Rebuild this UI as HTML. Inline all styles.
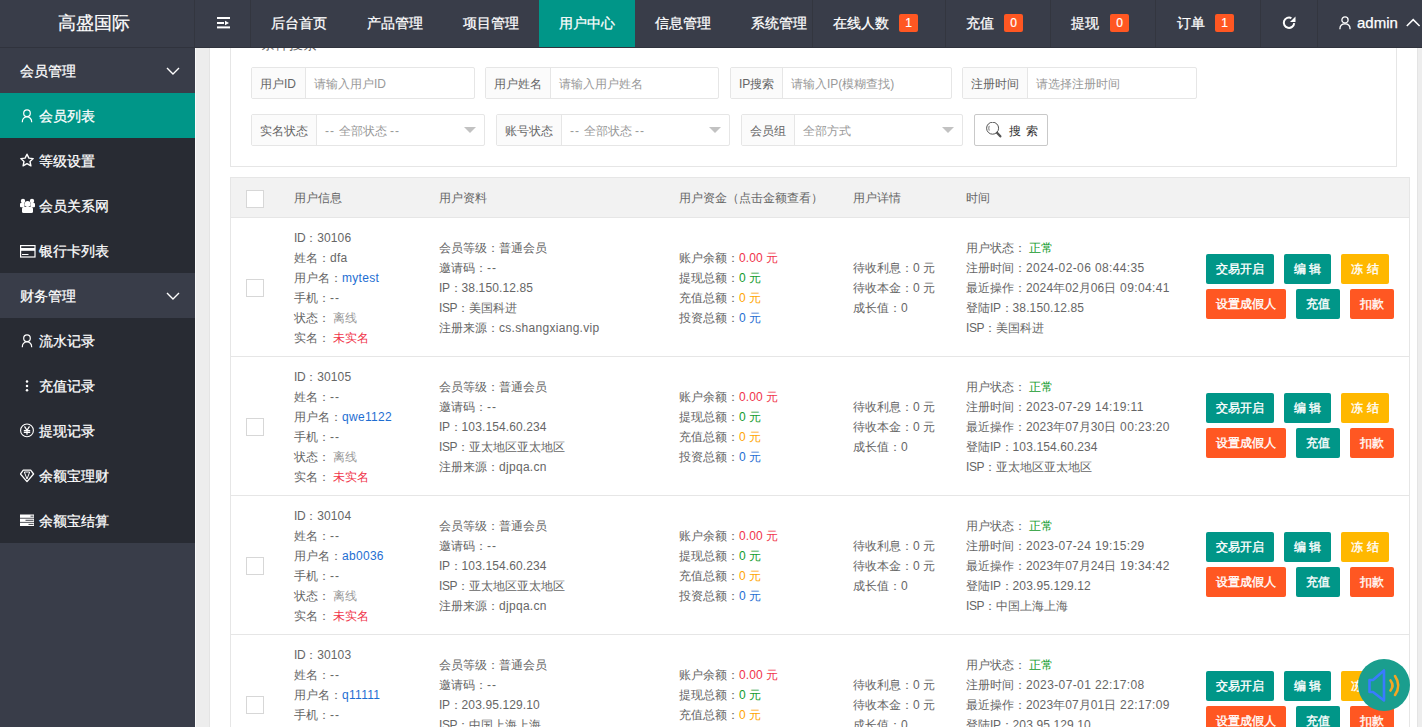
<!DOCTYPE html>
<html><head><meta charset="utf-8">
<style>
*{box-sizing:border-box;margin:0;padding:0}
html,body{width:1422px;height:727px;overflow:hidden;background:#f2f2f2;font-family:"Liberation Sans",sans-serif;}
.abs{position:absolute}
#header{position:absolute;left:0;top:0;width:1422px;height:48px;background:#393D49;border-bottom:1px solid #30333d;}
#logo{position:absolute;left:58px;top:0;height:47px;line-height:46px;color:#fff;font-size:18px;-webkit-text-stroke:0.2px #fff}
.sep{position:absolute;top:0;width:1px;height:47px;background:#33363f}
.nav{position:absolute;top:0;height:47px;line-height:46px;color:#fff;font-size:14px;-webkit-text-stroke:0.25px #fff}
.navact{background:#009688}
.badge{position:absolute;top:14px;width:19px;height:18px;line-height:19px;-webkit-text-stroke:0.2px #fff;background:#FF5722;color:#fff;border-radius:2px;font-size:12px;text-align:center}
#side{position:absolute;left:0;top:48px;width:195px;height:679px;background:#393D49}
.si{position:absolute;left:0;width:195px;height:45px;color:#fff;font-size:14px;-webkit-text-stroke:0.25px #fff}
.si .lbl{position:absolute;top:0;line-height:46px}
.si.child{background:#282B33}
.si.active{background:#009688}
.si .ic{position:absolute}
.chev{position:absolute;left:166px;top:19px}
#main{position:absolute;left:195px;top:48px;width:1227px;height:679px;background:#EDEDED;overflow:hidden;border-left:1px solid #fafafa}
#card{position:absolute;left:13px;top:-20px;width:1209px;height:800px;background:#fff;border-left:1px solid #e4e4e4;border-right:1px solid #e4e4e4}
#fs{position:absolute;left:230px;top:20px;width:1167px;height:147px;border:1px solid #e6e6e6;border-top:none}
.ig{position:absolute;height:32px;border:1px solid #e6e6e6;border-radius:2px;background:#fff;font-size:12px}
.ig .lab{position:absolute;left:0;top:0;height:30px;line-height:30px;background:#FBFBFB;border-right:1px solid #e6e6e6;color:#666;padding-left:8px;padding-top:1px}
.ig .ph{position:absolute;top:1px;line-height:30px;color:#999}
.dd{letter-spacing:1.1px}
.ig .tri{position:absolute;top:12px;width:0;height:0;border-left:6px solid transparent;border-right:6px solid transparent;border-top:6px solid #c2c2c2}
#sbtn{position:absolute;left:974px;top:114px;width:74px;height:32px;border:1px solid #C9C9C9;border-radius:2px;background:#fff;font-size:12px;color:#333}
#table{position:absolute;left:230px;top:177px;width:1180px;height:560px;border:1px solid #e6e6e6;background:#fff}
#thead{position:absolute;left:0;top:0;width:1178px;height:40px;background:#f2f2f2;border-bottom:1px solid #e6e6e6}
.th{position:absolute;top:0;line-height:40px;font-size:12px;color:#666}
.cb{position:absolute;width:18px;height:18px;border:1px solid #d7d7d7;background:#fff}
.tr{position:absolute;left:230px;width:1180px;height:139px;border-bottom:1px solid #e6e6e6}
.cell{position:absolute;font-size:12px;line-height:20px;color:#666;white-space:nowrap}
.blue{color:#1E6ED2}
.red{color:#F0344A}
.green{color:#129B2C}
.orange{color:#FFA500}
.gray{color:#999}
.cell .en{letter-spacing:0.12px}
.cell .enl{letter-spacing:0.3px}
.cell .enu{letter-spacing:-0.4px}
.cell .ent{letter-spacing:0.38px}
.btns{position:absolute;width:200px;height:65px}
.btn{position:absolute;top:0;height:30px;line-height:30px;font-size:12px;color:#fff;text-align:center;border-radius:2px;white-space:nowrap;-webkit-text-stroke:0.35px #fff}
.teal{background:#009688}
.yellow{background:#FFB800}
.orangebtn{background:#FF5722}
#audio{position:absolute;left:1358px;top:659px;width:52px;height:52px;border-radius:50%;background:#1A9E8E}
</style></head><body>
<div id="main">
  <div id="card"></div>
</div>
<div id="fs"></div>
<div class="abs" style="left:261px;top:36px;font-size:14px;color:#666;">条件搜索</div>

<div class="ig" style="left:251px;top:67px;width:224px"><span class="lab" style="width:54px">用户ID</span><span class="ph" style="left:62px">请输入用户ID</span></div>
<div class="ig" style="left:485px;top:67px;width:234px"><span class="lab" style="width:65px">用户姓名</span><span class="ph" style="left:73px">请输入用户姓名</span></div>
<div class="ig" style="left:730px;top:67px;width:222px"><span class="lab" style="width:52px">IP搜索</span><span class="ph" style="left:60px">请输入IP(模糊查找)</span></div>
<div class="ig" style="left:962px;top:67px;width:235px"><span class="lab" style="width:65px">注册时间</span><span class="ph" style="left:73px">请选择注册时间</span></div>

<div class="ig" style="left:251px;top:114px;width:234px"><span class="lab" style="width:65px">实名状态</span><span class="ph" style="left:73px"><span class="dd">--</span> 全部状态 <span class="dd">--</span></span><span class="tri" style="left:212px"></span></div>
<div class="ig" style="left:496px;top:114px;width:234px"><span class="lab" style="width:65px">账号状态</span><span class="ph" style="left:73px"><span class="dd">--</span> 全部状态 <span class="dd">--</span></span><span class="tri" style="left:212px"></span></div>
<div class="ig" style="left:741px;top:114px;width:222px"><span class="lab" style="width:53px">会员组</span><span class="ph" style="left:61px">全部方式</span><span class="tri" style="left:200px"></span></div>
<div id="sbtn"><svg style="position:absolute;left:11px;top:7px" width="17" height="17" viewBox="0 0 17 17"><circle cx="6.6" cy="6.2" r="6" fill="none" stroke="#555" stroke-width="1"/><path d="M3.2 3.8 Q2.3 6.2 3.2 8.6" fill="none" stroke="#666" stroke-width="0.9"/><path d="M11 10.8 L14.3 14.3" stroke="#555" stroke-width="2.4" stroke-linecap="round"/></svg><span style="position:absolute;left:34px;top:1px;line-height:30px;letter-spacing:0.5px;word-spacing:1px">搜 索</span></div>

<div id="table">
  <div id="thead">
    <span class="cb" style="left:15px;top:12px"></span>
    <span class="th" style="left:63px">用户信息</span>
    <span class="th" style="left:208px">用户资料</span>
    <span class="th" style="left:448px">用户资金（点击金额查看）</span>
    <span class="th" style="left:622px">用户详情</span>
    <span class="th" style="left:735px">时间</span>
  </div>
</div>

<div class="tr" style="top:218px">
  <span class="cb" style="left:16px;top:61px"></span>
  <div class="cell" style="left:64px;top:10px"><span class="enu">ID</span>：<span class="en">30106</span><br>姓名：<span class="enl">dfa</span><br>用户名：<span class="blue"><span class="enl">mytest</span></span><br>手机：<span class="dd">--</span><br>状态： <span class="gray">离线</span><br>实名： <span class="red">未实名</span></div>
  <div class="cell" style="left:209px;top:20px">会员等级：普通会员<br>邀请码：<span class="dd">--</span><br><span class="enu">IP</span>：<span class="en">38.150.12.85</span><br><span class="enu">ISP</span>：美国科进<br>注册来源：<span class="enl">cs.shangxiang.vip</span></div>
  <div class="cell" style="left:449px;top:30px">账户余额：<span class="red"><span class="en">0.00 </span>元</span><br>提现总额：<span class="green"><span class="en">0 </span>元</span><br>充值总额：<span class="orange"><span class="en">0 </span>元</span><br>投资总额：<span class="blue"><span class="en">0 </span>元</span></div>
  <div class="cell" style="left:623px;top:40px">待收利息：<span class="en">0 </span>元<br>待收本金：<span class="en">0 </span>元<br>成长值：<span class="en">0</span></div>
  <div class="cell" style="left:736px;top:20px">用户状态： <span class="green">正常</span><br>注册时间：<span class="ent">2024-02-06 08:44:35</span><br>最近操作：<span class="en">2024</span>年<span class="en">02</span>月<span class="en">06</span>日<span class="ent"> 09:04:41</span><br>登陆<span class="enu">IP</span>：<span class="en">38.150.12.85</span><br><span class="enu">ISP</span>：美国科进</div>
  <div class="btns" style="left:976px;top:36px">
    <span class="btn teal" style="left:0;width:68px">交易开启</span><span class="btn teal" style="left:78px;width:47px">编 辑</span><span class="btn yellow" style="left:135px;width:48px">冻 结</span>
    <span class="btn orangebtn" style="left:0;top:35px;width:80px">设置成假人</span><span class="btn teal" style="left:90px;top:35px;width:44px">充值</span><span class="btn orangebtn" style="left:144px;top:35px;width:44px">扣款</span>
  </div>
</div>
<div class="tr" style="top:357px">
  <span class="cb" style="left:16px;top:61px"></span>
  <div class="cell" style="left:64px;top:10px"><span class="enu">ID</span>：<span class="en">30105</span><br>姓名：<span class="dd">--</span><br>用户名：<span class="blue"><span class="enl">qwe1122</span></span><br>手机：<span class="dd">--</span><br>状态： <span class="gray">离线</span><br>实名： <span class="red">未实名</span></div>
  <div class="cell" style="left:209px;top:20px">会员等级：普通会员<br>邀请码：<span class="dd">--</span><br><span class="enu">IP</span>：<span class="en">103.154.60.234</span><br><span class="enu">ISP</span>：亚太地区亚太地区<br>注册来源：<span class="enl">djpqa.cn</span></div>
  <div class="cell" style="left:449px;top:30px">账户余额：<span class="red"><span class="en">0.00 </span>元</span><br>提现总额：<span class="green"><span class="en">0 </span>元</span><br>充值总额：<span class="orange"><span class="en">0 </span>元</span><br>投资总额：<span class="blue"><span class="en">0 </span>元</span></div>
  <div class="cell" style="left:623px;top:40px">待收利息：<span class="en">0 </span>元<br>待收本金：<span class="en">0 </span>元<br>成长值：<span class="en">0</span></div>
  <div class="cell" style="left:736px;top:20px">用户状态： <span class="green">正常</span><br>注册时间：<span class="ent">2023-07-29 14:19:11</span><br>最近操作：<span class="en">2023</span>年<span class="en">07</span>月<span class="en">30</span>日<span class="ent"> 00:23:20</span><br>登陆<span class="enu">IP</span>：<span class="en">103.154.60.234</span><br><span class="enu">ISP</span>：亚太地区亚太地区</div>
  <div class="btns" style="left:976px;top:36px">
    <span class="btn teal" style="left:0;width:68px">交易开启</span><span class="btn teal" style="left:78px;width:47px">编 辑</span><span class="btn yellow" style="left:135px;width:48px">冻 结</span>
    <span class="btn orangebtn" style="left:0;top:35px;width:80px">设置成假人</span><span class="btn teal" style="left:90px;top:35px;width:44px">充值</span><span class="btn orangebtn" style="left:144px;top:35px;width:44px">扣款</span>
  </div>
</div>
<div class="tr" style="top:496px">
  <span class="cb" style="left:16px;top:61px"></span>
  <div class="cell" style="left:64px;top:10px"><span class="enu">ID</span>：<span class="en">30104</span><br>姓名：<span class="dd">--</span><br>用户名：<span class="blue"><span class="enl">ab0036</span></span><br>手机：<span class="dd">--</span><br>状态： <span class="gray">离线</span><br>实名： <span class="red">未实名</span></div>
  <div class="cell" style="left:209px;top:20px">会员等级：普通会员<br>邀请码：<span class="dd">--</span><br><span class="enu">IP</span>：<span class="en">103.154.60.234</span><br><span class="enu">ISP</span>：亚太地区亚太地区<br>注册来源：<span class="enl">djpqa.cn</span></div>
  <div class="cell" style="left:449px;top:30px">账户余额：<span class="red"><span class="en">0.00 </span>元</span><br>提现总额：<span class="green"><span class="en">0 </span>元</span><br>充值总额：<span class="orange"><span class="en">0 </span>元</span><br>投资总额：<span class="blue"><span class="en">0 </span>元</span></div>
  <div class="cell" style="left:623px;top:40px">待收利息：<span class="en">0 </span>元<br>待收本金：<span class="en">0 </span>元<br>成长值：<span class="en">0</span></div>
  <div class="cell" style="left:736px;top:20px">用户状态： <span class="green">正常</span><br>注册时间：<span class="ent">2023-07-24 19:15:29</span><br>最近操作：<span class="en">2023</span>年<span class="en">07</span>月<span class="en">24</span>日<span class="ent"> 19:34:42</span><br>登陆<span class="enu">IP</span>：<span class="en">203.95.129.12</span><br><span class="enu">ISP</span>：中国上海上海</div>
  <div class="btns" style="left:976px;top:36px">
    <span class="btn teal" style="left:0;width:68px">交易开启</span><span class="btn teal" style="left:78px;width:47px">编 辑</span><span class="btn yellow" style="left:135px;width:48px">冻 结</span>
    <span class="btn orangebtn" style="left:0;top:35px;width:80px">设置成假人</span><span class="btn teal" style="left:90px;top:35px;width:44px">充值</span><span class="btn orangebtn" style="left:144px;top:35px;width:44px">扣款</span>
  </div>
</div>
<div class="tr" style="top:635px">
  <span class="cb" style="left:16px;top:61px"></span>
  <div class="cell" style="left:64px;top:10px"><span class="enu">ID</span>：<span class="en">30103</span><br>姓名：<span class="dd">--</span><br>用户名：<span class="blue"><span class="enl">q11111</span></span><br>手机：<span class="dd">--</span><br>状态： <span class="gray">离线</span><br>实名： <span class="red">未实名</span></div>
  <div class="cell" style="left:209px;top:20px">会员等级：普通会员<br>邀请码：<span class="dd">--</span><br><span class="enu">IP</span>：<span class="en">203.95.129.10</span><br><span class="enu">ISP</span>：中国上海上海<br>注册来源：<span class="enl">djpqa.cn</span></div>
  <div class="cell" style="left:449px;top:30px">账户余额：<span class="red"><span class="en">0.00 </span>元</span><br>提现总额：<span class="green"><span class="en">0 </span>元</span><br>充值总额：<span class="orange"><span class="en">0 </span>元</span><br>投资总额：<span class="blue"><span class="en">0 </span>元</span></div>
  <div class="cell" style="left:623px;top:40px">待收利息：<span class="en">0 </span>元<br>待收本金：<span class="en">0 </span>元<br>成长值：<span class="en">0</span></div>
  <div class="cell" style="left:736px;top:20px">用户状态： <span class="green">正常</span><br>注册时间：<span class="ent">2023-07-01 22:17:08</span><br>最近操作：<span class="en">2023</span>年<span class="en">07</span>月<span class="en">01</span>日<span class="ent"> 22:17:09</span><br>登陆<span class="enu">IP</span>：<span class="en">203.95.129.10</span><br><span class="enu">ISP</span>：中国上海上海</div>
  <div class="btns" style="left:976px;top:36px">
    <span class="btn teal" style="left:0;width:68px">交易开启</span><span class="btn teal" style="left:78px;width:47px">编 辑</span><span class="btn yellow" style="left:135px;width:48px">冻 结</span>
    <span class="btn orangebtn" style="left:0;top:35px;width:80px">设置成假人</span><span class="btn teal" style="left:90px;top:35px;width:44px">充值</span><span class="btn orangebtn" style="left:144px;top:35px;width:44px">扣款</span>
  </div>
</div>

<div id="header">
  <div id="logo">高盛国际</div>
  <span class="sep" style="left:194px"></span>
  <svg class="abs" style="left:217px;top:16px" width="14" height="14" viewBox="0 0 14 14"><rect x="0" y="1" width="13" height="2" fill="#fff"/><rect x="0" y="6" width="7" height="2" fill="#fff"/><path d="M8 4.8 L12 7 L8 9.2 Z" fill="#fff"/><rect x="0" y="10.4" width="13" height="2" fill="#fff"/></svg>
  <span class="sep" style="left:250px"></span>
  <span class="nav" style="left:271px">后台首页</span>
  <span class="nav" style="left:367px">产品管理</span>
  <span class="nav" style="left:463px">项目管理</span>
  <span class="nav navact" style="left:539px;width:96px;padding-left:20px">用户中心</span>
  <span class="nav" style="left:655px">信息管理</span>
  <span class="nav" style="left:751px">系统管理</span>
  <div class="abs" style="left:812px;top:0;width:610px;height:47px;background:#393D49">
    <span class="sep" style="left:0"></span>
    <span class="nav" style="left:21px">在线人数</span><span class="badge" style="left:87px">1</span>
    <span class="sep" style="left:133px"></span>
    <span class="nav" style="left:154px">充值</span><span class="badge" style="left:192px">0</span>
    <span class="sep" style="left:238px"></span>
    <span class="nav" style="left:259px">提现</span><span class="badge" style="left:298px">0</span>
    <span class="sep" style="left:343px"></span>
    <span class="nav" style="left:365px">订单</span><span class="badge" style="left:403px">1</span>
    <span class="sep" style="left:448px"></span>
    <svg class="abs" style="left:469px;top:15px" width="16" height="16" viewBox="0 0 16 16"><path d="M13.2 8.2 A5.2 5.2 0 1 1 10.4 3.1" fill="none" stroke="#fff" stroke-width="2"/><path d="M14.5 1.5 L14.5 7 L9 7 Z" fill="#fff"/></svg>
    <span class="sep" style="left:505px"></span>
    <svg class="abs" style="left:527px;top:16px" width="13" height="14" viewBox="0 0 13 14"><circle cx="6" cy="3.9" r="3.1" fill="none" stroke="#fff" stroke-width="1.3"/><path d="M0.9 13.2 C0.9 9.6 3 7.9 6 7.9 C9 7.9 11.1 9.6 11.1 13.2" fill="none" stroke="#fff" stroke-width="1.3"/></svg>
    <span class="nav" style="left:545px;font-size:15px">admin</span>
    <svg class="abs" style="left:594px;top:18px" width="16" height="10" viewBox="0 0 16 10"><path d="M0.8 8 L7.2 1.6 L13.6 8" fill="none" stroke="#fff" stroke-width="1.5"/></svg>
  </div>
</div>
<div id="side">
<div class="si parent" style="top:0px"><span class="lbl" style="left:20px">会员管理</span><svg class="chev" width="14" height="8" viewBox="0 0 14 8"><path d="M1 1 L7 7 L13 1" fill="none" stroke="#fff" stroke-width="1.4"/></svg></div>
<div class="si active" style="top:45px"><svg class="ic" style="left:21px;top:16px" width="14" height="14" viewBox="0 0 14 14"><circle cx="6" cy="4.2" r="3.3" fill="none" stroke="#fff" stroke-width="1.2"/><path d="M1.3 13.2 C1.3 9.6 3.4 8 6 8 C8.6 8 10.7 9.6 10.7 13.2" fill="none" stroke="#fff" stroke-width="1.2"/></svg><span class="lbl" style="left:39px">会员列表</span></div>
<div class="si child" style="top:90px"><svg class="ic" style="left:20px;top:15px" width="15" height="15" viewBox="0 0 15 15"><path d="M7 1.2 L8.9 5.1 L13.2 5.6 L10 8.5 L10.9 12.8 L7 10.6 L3.1 12.8 L4 8.5 L0.8 5.6 L5.1 5.1 Z" fill="none" stroke="#fff" stroke-width="1.4" stroke-linejoin="round"/></svg><span class="lbl" style="left:39px">等级设置</span></div>
<div class="si child" style="top:135px"><svg class="ic" style="left:20px;top:15px" width="16" height="15" viewBox="0 0 16 15"><circle cx="3" cy="3" r="2.2" fill="#fff"/><circle cx="12" cy="3" r="2.2" fill="#fff"/><rect x="0" y="5" width="4.6" height="4.2" rx="1" fill="#fff"/><rect x="10.4" y="5" width="4.6" height="4.2" rx="1" fill="#fff"/><circle cx="7.6" cy="6" r="2.9" fill="#fff"/><rect x="2" y="9" width="11" height="6" rx="1.5" fill="#fff"/></svg><span class="lbl" style="left:39px">会员关系网</span></div>
<div class="si child" style="top:180px"><svg class="ic" style="left:20px;top:17px" width="16" height="13" viewBox="0 0 16 13"><rect x="0.6" y="0.6" width="14.4" height="11.4" fill="none" stroke="#fff" stroke-width="1.2"/><rect x="0.6" y="3" width="14.4" height="2.8" fill="#fff"/><rect x="2" y="9" width="6.5" height="1" fill="#fff"/></svg><span class="lbl" style="left:39px">银行卡列表</span></div>
<div class="si parent" style="top:225px"><span class="lbl" style="left:20px">财务管理</span><svg class="chev" width="14" height="8" viewBox="0 0 14 8"><path d="M1 1 L7 7 L13 1" fill="none" stroke="#fff" stroke-width="1.4"/></svg></div>
<div class="si child" style="top:270px"><svg class="ic" style="left:21px;top:16px" width="14" height="14" viewBox="0 0 14 14"><circle cx="6" cy="4.2" r="3.3" fill="none" stroke="#fff" stroke-width="1.2"/><path d="M1.3 13.2 C1.3 9.6 3.4 8 6 8 C8.6 8 10.7 9.6 10.7 13.2" fill="none" stroke="#fff" stroke-width="1.2"/></svg><span class="lbl" style="left:39px">流水记录</span></div>
<div class="si child" style="top:315px"><svg class="ic" style="left:20px;top:16px" width="14" height="14" viewBox="0 0 14 14"><circle cx="7" cy="2.4" r="1.25" fill="#fff"/><circle cx="7" cy="6.9" r="1.25" fill="#fff"/><circle cx="7" cy="11.2" r="1.25" fill="#fff"/></svg><span class="lbl" style="left:39px">充值记录</span></div>
<div class="si child" style="top:360px"><svg class="ic" style="left:20px;top:15px" width="15" height="15" viewBox="0 0 15 15"><circle cx="7" cy="7.4" r="6.4" fill="none" stroke="#fff" stroke-width="1.1"/><path d="M4.5 3.4 L7 7.3 L9.5 3.4 M7 7.3 V11.8 M3.8 7.6 H10.2 M3.8 9.4 H10.2" fill="none" stroke="#fff" stroke-width="1.2"/></svg><span class="lbl" style="left:39px">提现记录</span></div>
<div class="si child" style="top:405px"><svg class="ic" style="left:20px;top:16px" width="15" height="14" viewBox="0 0 15 14"><path d="M3.3 1.2 H10.7 L13.6 5 L7 12.6 L0.4 5 Z" fill="none" stroke="#fff" stroke-width="1.3" stroke-linejoin="round"/><path d="M4.3 3 H9.7 L7 10 Z" fill="none" stroke="#fff" stroke-width="1"/></svg><span class="lbl" style="left:39px">余额宝理财</span></div>
<div class="si child" style="top:450px"><svg class="ic" style="left:20px;top:16px" width="14" height="12" viewBox="0 0 14 12"><rect x="0" y="0.5" width="14" height="3.3" fill="#fff"/><rect x="0" y="4.6" width="14" height="3.3" fill="#fff"/><rect x="0" y="8.7" width="14" height="3.3" fill="#fff"/><rect x="10.5" y="1.7" width="3" height="0.9" fill="#282B33"/><rect x="5.5" y="5.8" width="8" height="0.9" fill="#282B33"/><rect x="8.5" y="9.9" width="5" height="0.9" fill="#282B33"/></svg><span class="lbl" style="left:39px">余额宝结算</span></div>
</div>
<div id="audio"><svg style="position:absolute;left:0;top:0" width="52" height="52" viewBox="0 0 52 52"><path d="M11.5 21 H15 L26 11.5 V41.5 L15 33 H11.5 Z" fill="none" stroke="#3A7BFF" stroke-width="2.6" stroke-linejoin="round"/><path d="M32.5 21.5 Q36.5 26.5 32.5 31.5" fill="none" stroke="#F5A623" stroke-width="2.6" stroke-linecap="round"/><path d="M37 17 Q43.5 26.5 37 36" fill="none" stroke="#F5A623" stroke-width="2.6" stroke-linecap="round"/></svg></div>
</body></html>
